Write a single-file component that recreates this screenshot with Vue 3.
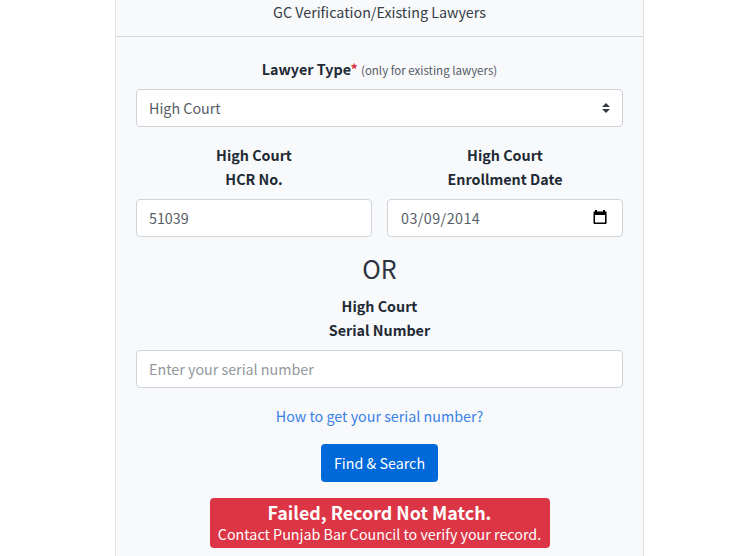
<script setup>
import { ref } from 'vue'

const lawyerType = ref('High Court')
const hcrNumber = ref('51039')
const enrollmentDate = ref('03/09/2014')
const serialNumber = ref('')
</script>

<template>
  <main class="card">
    <header class="card-header">GC Verification/Existing Lawyers</header>
    <form class="card-body" @submit.prevent>
      <div class="label single"><b>Lawyer Type<span class="required">*</span></b> <small>(only for existing lawyers)</small></div>
      <div class="control select">
        <span>{{ lawyerType }}</span>
        <svg class="carets" width="8" height="10" viewBox="0 0 4 5"><path fill="#343a40" d="M2 0L0 2h4zm0 5L0 3h4z" /></svg>
      </div>

      <div class="row">
        <div class="column">
          <label class="label bold" for="hcr">High Court<br />HCR No.</label>
          <input id="hcr" v-model="hcrNumber" class="control" />
        </div>
        <div class="column">
          <div class="label bold">High Court<br />Enrollment Date</div>
          <div class="control date">
            <span>{{ enrollmentDate }}</span>
            <svg class="calendar" width="14" height="14" viewBox="0 0 14 14"><path fill="#000" fill-rule="evenodd" d="M2 0h2v1.500h6V0h2v1.500h.6q1 0 1 1v10.500q0 1-1 1H1.500q-1 0-1-1V2.500q0-1 1-1H2zM2 5v7.500h10V5z" /></svg>
          </div>
        </div>
      </div>

      <h3 class="or">OR</h3>
      <label class="label bold" for="serial">High Court<br />Serial Number</label>
      <input id="serial" v-model="serialNumber" class="control" placeholder="Enter your serial number" />
      <a class="help">How to get your serial number?</a>
      <button class="submit">Find &amp; Search</button>
      <div class="alert" role="alert">
        <strong>Failed, Record Not Match.</strong>
        <span>Contact Punjab Bar Council to verify your record.</span>
      </div>
    </form>
  </main>
</template>

<style>
body {
  background: #fff;
  overflow: hidden;
}
</style>

<style scoped>
.card {
  box-sizing: border-box;
  width: 529px;
  height: 556px;
  margin-left: 115px;
  border: solid #dfe1e4;
  border-width: 0 1px;
  background: #f8f9fb;
  color: #212934;
  font: 14.300px/24px "Noto Sans CJK SC", "Noto Sans", sans-serif;
  text-align: center;
  overflow: hidden;
}
.card-header {
  box-sizing: border-box;
  height: 37px;
  border-bottom: 1px solid #d5d8dc;
  color: #353c46;
}
.card-body {
  display: flex;
  flex-direction: column;
  align-items: center;
  padding: 20px;
}
.label {
  display: block;
  margin-bottom: 8px;
}
.single {
  height: 24px;
}
.bold {
  font-weight: 700;
}
.required {
  color: #dc3545;
}
small {
  font-size: 11.500px;
  color: #545b66;
}
.control {
  box-sizing: border-box;
  width: 100%;
  height: 38px;
  padding: 5px 12px 7px;
  border: 1px solid #ced4da;
  border-radius: 4px;
  background: #fff;
  color: #565d66;
  font: inherit;
  text-align: left;
}
.control::placeholder {
  color: #94989c;
  opacity: 1;
}
.select,
.date {
  display: flex;
  align-items: center;
  justify-content: space-between;
  padding-top: 6px;
  padding-bottom: 6px;
}
.date {
  padding-right: 15px;
  padding-left: 13px;
  letter-spacing: 0.450px;
}
.calendar {
  margin-bottom: 2px;
}
.row {
  display: grid;
  grid-template-columns: 1fr 1fr;
  gap: 15px;
  width: 100%;
  margin: 16px 0 15px;
}
.or {
  height: 33px;
  margin: 0 0 9px;
  color: #2d343e;
  font-size: 25px;
  font-weight: 400;
  line-height: 33px;
}
.help {
  margin: 16px 0;
  color: #3880e6;
}
.submit {
  height: 38px;
  padding: 0;
  width: 117px;
  border: 0;
  border-radius: 4px;
  background: #0069d9;
  color: #fff;
  font: inherit;
}
.alert {
  box-sizing: border-box;
  display: flex;
  flex-direction: column;
  width: 340px;
  height: 50px;
  flex-shrink: 0;
  margin-top: 16px;
  padding-top: 3px;
  border-radius: 4px;
  background: #dc3545;
  color: #fff;
  line-height: 21px;
}
.alert strong {
  font-size: 17.900px;
  line-height: 22px;
}
</style>
